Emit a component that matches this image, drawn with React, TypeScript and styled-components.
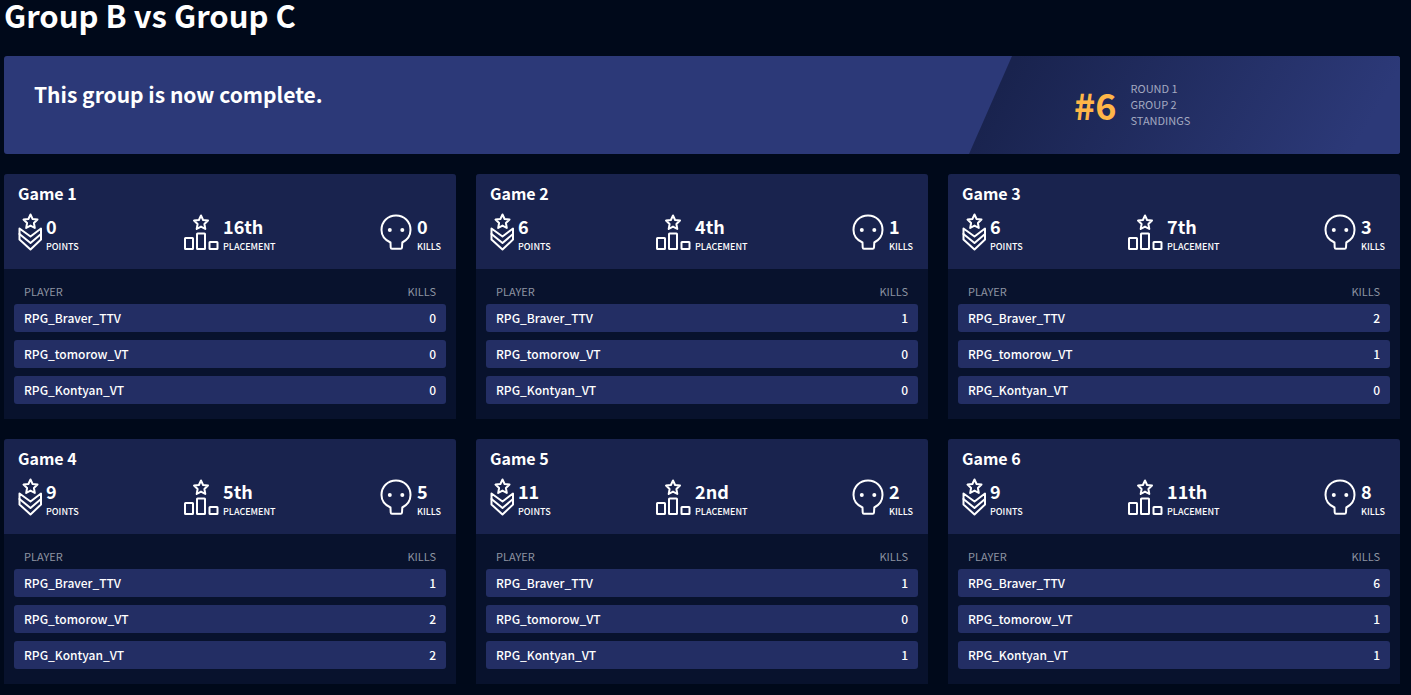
import React from "react";
import styled, { createGlobalStyle } from "styled-components";

const GlobalStyle = createGlobalStyle`
  *, *::before, *::after { box-sizing: border-box; }
  body {
    margin: 0;
    background: #00091a;
    color: #fff;
    font-family: "Noto Sans CJK JP", "Noto Sans", sans-serif;
    font-size: 12px;
  }
`;

const Page = styled.main`
  padding: 0 11px 11px 4px;
`;

const Title = styled.h1`
  margin: 0 0 26px;
  font-size: 31px;
  line-height: 30px;
  font-weight: 700;
`;

const Banner = styled.section`
  display: flex;
  justify-content: space-between;
  min-height: 98px;
  margin-bottom: 20px;
  border-radius: 3px;
  overflow: hidden;
  background: #2c3978;
`;

const BannerText = styled.h2`
  margin: 0;
  padding: 24px 30px;
  font-size: 21px;
  line-height: 28px;
  font-weight: 700;
`;

const Standing = styled.div`
  display: flex;
  align-items: center;
  gap: 14px;
  flex: 0 0 431px;
  padding: 0 0 2px 105px;
  background: linear-gradient(120deg, #19234e 10%, #2c3978 90%);
  clip-path: polygon(43px 0, 100% 0, 100% 100%, 0 100%);
`;

const Rank = styled.strong`
  color: #ffb648;
  font-size: 36px;
  line-height: 40px;
  font-weight: 700;
`;

const StandingLabel = styled.p`
  margin: 0;
  color: #a4a9c0;
  font-size: 11px;
  line-height: 16px;
  text-transform: uppercase;
`;

const Games = styled.div`
  display: grid;
  grid-template-columns: repeat(3, minmax(0, 1fr));
  gap: 20px;
`;

const Card = styled.article`
  border-radius: 3px 3px 0 0;
  overflow: hidden;
  background: #08122d;
`;

const CardHeader = styled.header`
  padding: 9px 15px 12px 14px;
  background: #19234e;
`;

const CardTitle = styled.h3`
  margin: 0 0 9px;
  font-size: 16px;
  line-height: 20px;
  font-weight: 700;
`;

const Stats = styled.div`
  display: flex;
  justify-content: space-between;
`;

const Stat = styled.div`
  display: flex;
  align-items: flex-start;
  gap: 4px;
`;

const StatText = styled.div`
  display: flex;
  flex-direction: column;
  padding-top: 3px;
`;

const StatValue = styled.strong`
  font-size: 18px;
  line-height: 22px;
  font-weight: 700;
`;

const StatLabel = styled.span`
  font-size: 9px;
  line-height: 20px;
  font-weight: 500;
  text-transform: uppercase;
`;

const Icon = styled.svg`
  display: block;
  height: 40px;
  fill: none;
  stroke: #fff;
  stroke-width: 2;
  stroke-linejoin: round;
  stroke-linecap: round;
`;

const TableWrap = styled.div`
  padding: 10px 10px 15px;
`;

const Table = styled.table`
  display: block;
  width: 100%;
`;

const Head = styled.thead`
  display: block;
  padding-bottom: 1px;
`;

const Body = styled.tbody`
  display: flex;
  flex-direction: column;
  gap: 8px;
`;

const Row = styled.tr`
  display: flex;
  justify-content: space-between;
  padding: 0 10px;
  border-radius: 3px;
`;

const PlayerRow = styled(Row)`
  background: #232e64;
`;

const HeadCell = styled.th`
  padding: 0;
  color: #8e94a2;
  font-size: 11px;
  line-height: 24px;
  font-weight: 400;
  text-transform: uppercase;
`;

const Cell = styled.td`
  padding: 0;
  font-size: 12px;
  line-height: 28px;
  font-weight: 500;
`;

const STAR = "M0 -7 L2.1 -2.5 L7 -1.9 L3.4 1.5 L4.3 6.5 L0 4.1 L-4.3 6.5 L-3.4 1.5 L-7 -1.9 L-2.1 -2.5 Z";

const PointsIcon = () => (
  <Icon width="24" viewBox="0 0 24 40" aria-hidden="true">
    <path d={STAR} transform="translate(12.500 9.500)" />
    <path d="M1.500 16.500 L12.500 24.500 L23 16.500 V27.500 L12.500 37.500 L1.500 27.500 Z" />
    <path d="M1.500 22 L12.500 31 L23 22" />
  </Icon>
);

const PlacementIcon = () => (
  <Icon width="36" viewBox="0 0 36 40" aria-hidden="true">
    <path d={STAR} transform="translate(18 10.500)" />
    <rect x="2" y="26" width="8" height="11" rx="0.500" />
    <rect x="14" y="21.500" width="8" height="15.500" rx="0.500" />
    <rect x="26.500" y="30" width="8" height="7" rx="0.500" />
  </Icon>
);

const KillsIcon = () => (
  <Icon width="33" viewBox="0 0 33 40" aria-hidden="true">
    <path d="M10.500 30.500 C5 28 1.500 23.500 1.500 18 C1.500 9.500 8 3.500 16 3.500 S30.500 9.500 30.500 18 C30.500 23.500 27 28 22.300 30.500 L22 35.500 Q21.900 36.800 20.700 36.800 H12 Q10.800 36.800 10.700 35.500 Z" />
    <circle cx="9.800" cy="18" r="2" fill="#fff" stroke="none" />
    <circle cx="22.300" cy="18" r="2" fill="#fff" stroke="none" />
  </Icon>
);

interface Game {
  points: number;
  placement: string;
  total: number;
  kills: number[];
}

const PLAYERS = ["RPG_Braver_TTV", "RPG_tomorow_VT", "RPG_Kontyan_VT"];

const GAMES: Game[] = [
  { points: 0, placement: "16th", total: 0, kills: [0, 0, 0] },
  { points: 6, placement: "4th", total: 1, kills: [1, 0, 0] },
  { points: 6, placement: "7th", total: 3, kills: [2, 1, 0] },
  { points: 9, placement: "5th", total: 5, kills: [1, 2, 2] },
  { points: 11, placement: "2nd", total: 2, kills: [1, 0, 1] },
  { points: 9, placement: "11th", total: 8, kills: [6, 1, 1] },
];

interface StatItemProps {
  icon: React.ReactNode;
  value: React.ReactNode;
  label: string;
}

const StatItem = ({ icon, value, label }: StatItemProps) => (
  <Stat>
    {icon}
    <StatText>
      <StatValue>{value}</StatValue>
      <StatLabel>{label}</StatLabel>
    </StatText>
  </Stat>
);

const GameCard = ({ game, number }: { game: Game; number: number }) => (
  <Card>
    <CardHeader>
      <CardTitle>Game {number}</CardTitle>
      <Stats>
        <StatItem icon={<PointsIcon />} value={game.points} label="Points" />
        <StatItem icon={<PlacementIcon />} value={game.placement} label="Placement" />
        <StatItem icon={<KillsIcon />} value={game.total} label="Kills" />
      </Stats>
    </CardHeader>
    <TableWrap>
      <Table>
        <Head>
          <Row>
            <HeadCell scope="col">Player</HeadCell>
            <HeadCell scope="col">Kills</HeadCell>
          </Row>
        </Head>
        <Body>
          {PLAYERS.map((name, i) => (
            <PlayerRow key={name}>
              <Cell>{name}</Cell>
              <Cell>{game.kills[i]}</Cell>
            </PlayerRow>
          ))}
        </Body>
      </Table>
    </TableWrap>
  </Card>
);

export default function App() {
  return (
    <>
      <GlobalStyle />
      <Page>
        <Title>Group B vs Group C</Title>
        <Banner>
          <BannerText>This group is now complete.</BannerText>
          <Standing>
            <Rank>#6</Rank>
            <StandingLabel>
              Round 1<br />
              Group 2<br />
              Standings
            </StandingLabel>
          </Standing>
        </Banner>
        <Games>
          {GAMES.map((game, i) => (
            <GameCard key={i} game={game} number={i + 1} />
          ))}
        </Games>
      </Page>
    </>
  );
}
